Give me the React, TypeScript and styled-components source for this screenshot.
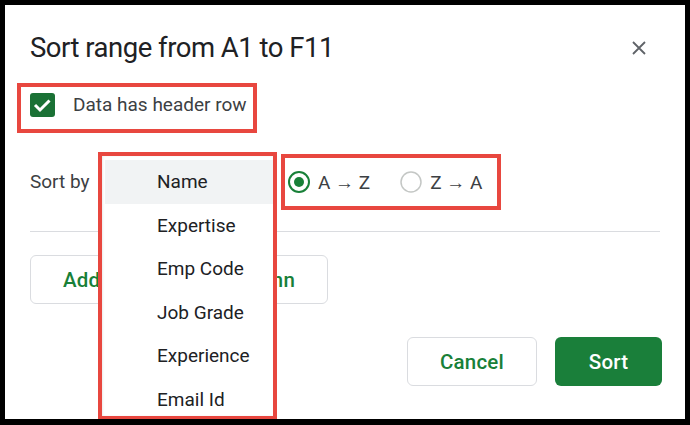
import React from "react";
import styled, { createGlobalStyle } from "styled-components";

const Global = createGlobalStyle`
  html, body { margin: 0; padding: 0; background: #000; }
  body { font-family: Roboto, "Noto Sans", Arial, sans-serif; }
  * { box-sizing: border-box; }
`;

const Panel = styled.div`
  margin: 5px 5px 6px 5px;
  width: 680px;
  height: 414px;
  background: #fff;
  padding: 25px 25px 0 25px;
  overflow: hidden;
  display: flex;
  flex-direction: column;
`;

const TitleRow = styled.div`
  display: flex;
  align-items: center;
  justify-content: space-between;
  height: 36px;
  margin-right: 13px;
`;

const Title = styled.h1`
  margin: 0;
  font-weight: 400;
  font-size: 27.5px;
  line-height: 36px;
  color: #202124;
  letter-spacing: -0.5px;
`;

const CloseButton = styled.button`
  border: 0;
  background: none;
  padding: 0;
  width: 16px;
  height: 16px;
  display: flex;
  align-items: center;
  justify-content: center;
  cursor: pointer;
`;

const Highlight = styled.div`
  border: 4px solid #e8473f;
`;

const CheckRow = styled(Highlight)`
  align-self: flex-start;
  margin: 17px 0 0 -13px;
  display: flex;
  align-items: center;
  gap: 18px;
  padding: 6px 6px 12px 9px;
`;

const Checkbox = styled.span`
  width: 25px;
  height: 24px;
  border-radius: 3px;
  background: #1a7135;
  display: flex;
  align-items: center;
  justify-content: center;
`;

const Label = styled.span`
  font-size: 19px;
  color: #3c4043;
  line-height: 24px;
  white-space: nowrap;
`;

const SortRow = styled.div`
  margin-top: 21px;
  display: flex;
  align-items: center;
  height: 56px;
`;

const SortLabel = styled(Label)`
  width: 68px;
  flex-shrink: 0;
`;

const SelectSlot = styled.div`
  position: relative;
  width: 179px;
  height: 56px;
  margin-right: 4px;
  flex-shrink: 0;
`;

const Menu = styled(Highlight)`
  position: absolute;
  left: 0;
  top: -2px;
  width: 179px;
  height: 268px;
  background: #fff;
  padding: 4px 0 0 3px;
  z-index: 2;
  box-shadow: inset 1px 0 2px rgba(0, 0, 0, 0.08);
`;

const MenuItem = styled.div<{ $active?: boolean }>`
  height: 43.5px;
  display: flex;
  align-items: center;
  padding-left: 52px;
  font-size: 19px;
  color: #202124;
  white-space: nowrap;
  background: ${(p) => (p.$active ? "#f1f3f4" : "transparent")};
`;

const RadioGroup = styled(Highlight)`
  display: flex;
  align-items: center;
  height: 56px;
  width: 220px;
  flex-shrink: 0;
  padding: 0 0 0 3px;
`;

const RadioOption = styled.label`
  display: flex;
  align-items: center;
  gap: 8px;
  font-size: 19px;
  color: #3c4043;
  margin-right: 30px;
  white-space: nowrap;
  flex-shrink: 0;
`;

const Divider = styled.hr`
  margin: 21px 0 0 0;
  border: 0;
  border-top: 1px solid #dadce0;
  width: 630px;
`;

const BaseButton = styled.button`
  height: 49px;
  border-radius: 6px;
  font-family: inherit;
  font-size: 20.5px;
  font-weight: 500;
  letter-spacing: 0.2px;
  cursor: pointer;
  white-space: nowrap;
  padding: 0;
`;

const OutlineButton = styled(BaseButton)<{ $w: number }>`
  width: ${(p) => p.$w}px;
  background: #fff;
  border: 1px solid #dadce0;
  color: #188038;
`;

const FilledButton = styled(BaseButton)`
  width: 107px;
  background: #1a7f3a;
  border: 0;
  color: #fff;
`;

const AddRow = styled.div`
  margin-top: 23px;
  display: flex;
`;

const Footer = styled.div`
  margin-top: 33px;
  display: flex;
  justify-content: flex-end;
  gap: 18px;
  margin-right: -2px;
`;

const Radio = ({ on }: { on: boolean }) => (
  <svg width="22" height="22" viewBox="0 0 22 22">
    <circle cx="11" cy="11" r="10" fill="none" stroke={on ? "#188038" : "#c4c7c5"} strokeWidth={on ? 2 : 1.5} />
    {on && <circle cx="11" cy="11" r="5" fill="#188038" />}
  </svg>
);

const items = ["Name", "Expertise", "Emp Code", "Job Grade", "Experience", "Email Id"];

export default function App() {
  return (
    <>
      <Global />
      <Panel>
        <TitleRow>
          <Title>Sort range from A1 to F11</Title>
          <CloseButton aria-label="Close">
            <svg width="14" height="14" viewBox="0 0 14 14">
              <path d="M1 1L13 13M13 1L1 13" stroke="#5f6368" strokeWidth="1.8" />
            </svg>
          </CloseButton>
        </TitleRow>
        <CheckRow>
          <Checkbox>
            <svg width="25" height="24" viewBox="0 0 25 24">
              <path d="M5 12L10 17L19.5 7.5" fill="none" stroke="#fff" strokeWidth="3" />
            </svg>
          </Checkbox>
          <Label>Data has header row</Label>
        </CheckRow>
        <SortRow>
          <SortLabel>Sort by</SortLabel>
          <SelectSlot>
            <Menu>
              {items.map((it, i) => (
                <MenuItem key={it} $active={i === 0}>
                  {it}
                </MenuItem>
              ))}
            </Menu>
          </SelectSlot>
          <RadioGroup>
            <RadioOption>
              <Radio on />A → Z
            </RadioOption>
            <RadioOption>
              <Radio on={false} />Z → A
            </RadioOption>
          </RadioGroup>
        </SortRow>
        <Divider />
        <AddRow>
          <OutlineButton $w={298}>Add another sort column</OutlineButton>
        </AddRow>
        <Footer>
          <OutlineButton $w={130}>Cancel</OutlineButton>
          <FilledButton>Sort</FilledButton>
        </Footer>
      </Panel>
    </>
  );
}
